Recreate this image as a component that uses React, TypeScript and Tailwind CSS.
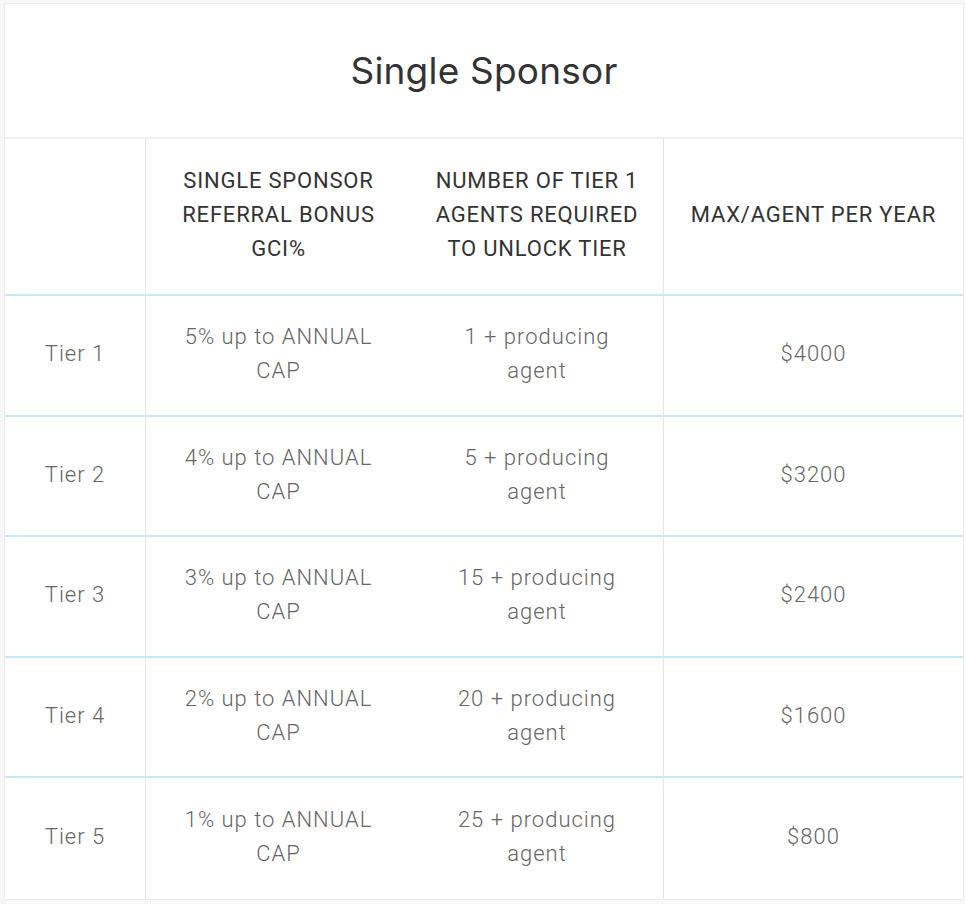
const rows = [
  { tier: "Tier 1", bonus: "5% up to ANNUAL", agents: "1 + producing", max: "$4000" },
  { tier: "Tier 2", bonus: "4% up to ANNUAL", agents: "5 + producing", max: "$3200" },
  { tier: "Tier 3", bonus: "3% up to ANNUAL", agents: "15 + producing", max: "$2400" },
  { tier: "Tier 4", bonus: "2% up to ANNUAL", agents: "20 + producing", max: "$1600" },
  { tier: "Tier 5", bonus: "1% up to ANNUAL", agents: "25 + producing", max: "$800" },
];

export default function App() {
  return (
    <div className="min-h-screen bg-[#f7f7f7] px-[4px] pt-[3px] pb-[5px] font-['Roboto',sans-serif]">
      <div className="bg-white border border-[#ececec] rounded-[2px] w-[960px]">
        <div className="h-[135px] flex items-center justify-center border-b-2 border-[#efefef]">
          <h2 className="text-[37px] text-[#333] font-['Inter',sans-serif] tracking-[0.2px]">Single Sponsor</h2>
        </div>
        <div className="grid grid-cols-[141px_265px_253px_1fr] text-center">
          <div className="h-[157px] border-r border-[#e6e6e6] border-b-2 border-b-[#c4e9f9]" />
          <div className="h-[157px] flex items-center justify-center border-b-2 border-b-[#c4e9f9] text-[22px] tracking-[0.8px] leading-[34px] text-[#333] pb-[4px]">
            <span>SINGLE SPONSOR<br />REFERRAL BONUS<br />GCI%</span>
          </div>
          <div className="h-[157px] flex items-center justify-center border-r border-[#e6e6e6] border-b-2 border-b-[#c4e9f9] text-[22px] tracking-[0.8px] leading-[34px] text-[#333] pb-[4px]">
            <span>NUMBER OF TIER 1<br />AGENTS REQUIRED<br />TO UNLOCK TIER</span>
          </div>
          <div className="h-[157px] flex items-center justify-center border-b-2 border-b-[#c4e9f9] text-[22px] tracking-[0.8px] leading-[34px] text-[#333] pb-[4px]">
            MAX/AGENT PER YEAR
          </div>
          {rows.map((r, i) => {
            const last = i === rows.length - 1;
            const bb = last ? "" : "border-b-2 border-b-[#c4e9f9]";
            const cell = `h-[120.5px] flex items-center justify-center ${bb} text-[22px] tracking-[1px] leading-[34px] text-[#666] font-light pb-[2px]`;
            return [
              <div key={r.tier + "a"} className={`${cell} border-r border-[#e6e6e6]`}>
                {r.tier}
              </div>,
              <div key={r.tier + "b"} className={cell}>
                <span>{r.bonus}<br />CAP</span>
              </div>,
              <div key={r.tier + "c"} className={`${cell} border-r border-[#e6e6e6]`}>
                <span>{r.agents}<br />agent</span>
              </div>,
              <div key={r.tier + "d"} className={cell}>
                {r.max}
              </div>,
            ];
          })}
        </div>
      </div>
    </div>
  );
}
